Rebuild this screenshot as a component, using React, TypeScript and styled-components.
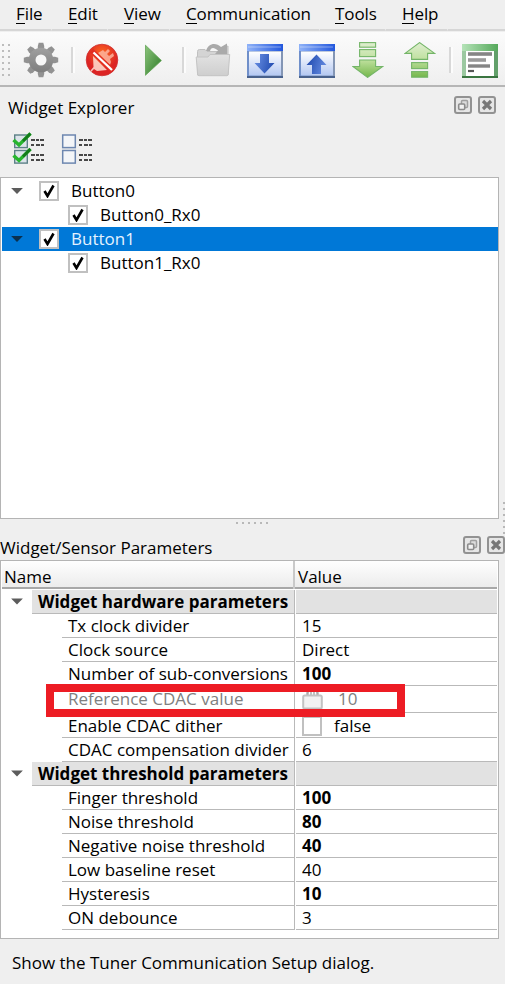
import React from "react";
import styled, { createGlobalStyle } from "styled-components";

const Global = createGlobalStyle`
  * { box-sizing: border-box; }
  html, body { margin: 0; background: #efefef; }
  body { overflow: hidden; }
`;

const Window = styled.div`
  width: 505px;
  height: 984px;
  position: relative;
  display: flex;
  flex-direction: column;
  background: #efefef;
  color: #000;
  font: 17px/24px "Open Sans", "Noto Sans", sans-serif;
  white-space: nowrap;
  overflow: hidden;
`;

const Label = styled.span<{ $track?: number }>`
  letter-spacing: ${(p) => p.$track ?? 0}px;
`;

const MenuBar = styled.nav`
  height: 32px;
  flex: none;
  display: flex;
`;

const MenuItem = styled.div<{ $width: number; $pad: number; $last?: boolean }>`
  width: ${(p) => p.$width}px;
  flex: none;
  height: 31px;
  padding: 2px 0 0 ${(p) => p.$pad}px;
  border-bottom: 2px solid #d6d6d6;
  border-right: ${(p) => (p.$last ? "0" : "1px solid #efefef")};
`;

const Mnemonic = styled.span`
  display: inline-block;
  height: 22px;
  line-height: 24px;
  border-bottom: 1px solid #000;
`;

const ToolBar = styled.div`
  height: 55px;
  flex: none;
  display: flex;
  align-items: flex-start;
  padding-top: 10px;
  background: linear-gradient(#fbfbfb, #efefef);
  border-bottom: 2px solid #b6b6b6;
`;

const ToolIcon = styled.svg<{ $gap: number; $w?: number }>`
  display: block;
  flex: none;
  width: ${(p) => p.$w ?? 36}px;
  height: 36px;
  margin-left: ${(p) => p.$gap}px;
`;

const Separator = styled.i<{ $gap: number }>`
  flex: none;
  width: 4px;
  height: 26px;
  margin: 5px 0 0 ${(p) => p.$gap}px;
  background: #d8d8d8;
  border-right: 2px solid #fcfcfc;
`;

const DockTitle = styled.header<{ $height: number; $top: number }>`
  height: ${(p) => p.$height}px;
  flex: none;
  display: flex;
  align-items: flex-start;
  padding: ${(p) => p.$top}px 9px 0 8px;
`;

const DockButtons = styled.div`
  margin-left: auto;
  display: flex;
  gap: 6px;
`;

const DockIcon = styled.svg`
  display: block;
  width: 18px;
  height: 18px;
`;

const CheckTools = styled.div`
  height: 47px;
  flex: none;
  display: flex;
  gap: 16px;
  padding: 2px 0 0 12px;
`;

const CheckToolIcon = styled.svg`
  display: block;
  width: 33px;
  height: 34px;
`;

const Panel = styled.section<{ $height: number }>`
  width: 499px;
  height: ${(p) => p.$height}px;
  flex: none;
  background: #fff;
  border: 1px solid #b4b4b4;
`;

const TreeRow = styled.div<{ $selected?: boolean; $level: number }>`
  height: 24px;
  margin: 0 0 0 1px;
  padding-left: ${(p) => 8 + p.$level * 58}px;
  display: flex;
  align-items: center;
  background: ${(p) => (p.$selected ? "#0078d7" : "transparent")};
  color: ${(p) => (p.$selected ? "#e4f2ff" : "#000")};
`;

const Tree = styled.div`
  padding-top: 1px;
`;

const Arrow = styled.i<{ $color?: string }>`
  flex: none;
  width: 14px;
  height: 7px;
  margin: 0 15px 0 0;
  background: ${(p) => p.$color ?? "#5c5c5c"};
  clip-path: polygon(8% 8%, 92% 8%, 50% 92%);
`;

const CheckBox = styled.span<{ $gap?: number }>`
  flex: none;
  width: 20px;
  height: 20px;
  margin-right: ${(p) => p.$gap ?? 12}px;
  border: 2px solid #c0c0c0;
  background: #fff;
  display: flex;
  align-items: center;
  justify-content: center;
`;

const SplitterDots = styled.div`
  height: 17px;
  flex: none;
  padding: 3px 0 0 236px;
  display: flex;
  gap: 4px;
`;

const Dot = styled.i`
  width: 2px;
  height: 2px;
  background: #b8b8b8;
`;

const EdgeDots = styled.div`
  position: absolute;
  left: 503px;
  top: 502px;
  display: flex;
  flex-direction: column;
  gap: 4px;
`;

const HeaderRow = styled.div`
  height: 28px;
  margin: 0 1px;
  display: grid;
  grid-template-columns: 293px 1fr;
  background: linear-gradient(#fefefe, #ececec);
  border-bottom: 2px solid #a8a8a8;
`;

const HeaderCell = styled.div<{ $first?: boolean }>`
  padding: ${(p) => (p.$first ? "4px 0 0 2px" : "4px 0 0 3px")};
  border-right: ${(p) => (p.$first ? "2px solid #c9c9c9" : "0")};
`;

const Row = styled.div<{ $tall?: boolean }>`
  height: ${(p) => (p.$tall ? 28 : 24)}px;
  margin: 0 1px 0 1px;
  display: grid;
  grid-template-columns: 293px 1fr;
  column-gap: 1px;
`;

const NameSide = styled.div`
  display: flex;
  align-items: center;
  min-width: 0;
`;

const NameCell = styled.div<{ $group?: boolean; $muted?: boolean }>`
  flex: 1;
  height: ${(p) => (p.$group ? "calc(100% - 1px)" : "calc(100% - 1px)")};
  align-self: flex-end;
  min-width: 0;
  padding-left: 6px;
  margin-left: ${(p) => (p.$group ? 0 : 60)}px;
  display: flex;
  align-items: center;
  border-bottom: 1px solid #b9b9b9;
  border-right: 1px solid #b9b9b9;
  background: ${(p) => (p.$group ? "#e2e2e2" : "transparent")};
  color: ${(p) => (p.$muted ? "#808080" : "#000")};
  font-weight: ${(p) => (p.$group ? 700 : 400)};
`;

const ValueCell = styled.div<{ $group?: boolean; $bold?: boolean; $muted?: boolean }>`
  height: calc(100% - 1px);
  align-self: end;
  padding-left: 6px;
  display: flex;
  align-items: center;
  border-bottom: 1px solid #b9b9b9;
  background: ${(p) => (p.$group ? "#e2e2e2" : "transparent")};
  color: ${(p) => (p.$muted ? "#808080" : "#000")};
  font-weight: ${(p) => (p.$bold ? 700 : 400)};
`;

const Toggle = styled.span`
  width: 30px;
  padding-left: 8px;
  display: flex;
`;

const LockIcon = styled.svg`
  width: 21px;
  height: 22px;
  margin-right: 15px;
`;

const Highlight = styled.div`
  position: absolute;
  left: 46px;
  top: 684px;
  width: 359px;
  height: 33px;
  border: 8px solid #ed1c24;
`;

const StatusBar = styled.footer`
  padding: 12px 0 0 12px;
`;

const Check = () => (
  <svg width="12" height="14" viewBox="0 0 12 14">
    <path d="M1.5 7 L4.5 12 L10.5 1.5" fill="none" stroke="#000" strokeWidth="2.6" />
  </svg>
);

const FloatIcon = () => (
  <DockIcon viewBox="0 0 18 18">
    <rect x="1" y="1" width="16" height="16" rx="2" fill="#e6e6e6" stroke="#929292" strokeWidth="2" />
    <rect x="7.5" y="4.5" width="6" height="7" rx="1" fill="#dcdcdc" stroke="#a0a0a0" strokeWidth="1.5" />
    <rect x="4.7" y="8" width="6" height="5.5" rx="1" fill="#f2f2f2" stroke="#8c8c8c" strokeWidth="1.6" />
  </DockIcon>
);

const CloseIcon = () => (
  <DockIcon viewBox="0 0 18 18">
    <rect x="1" y="1" width="16" height="16" rx="2" fill="#e6e6e6" stroke="#929292" strokeWidth="2" />
    <path d="M5 5 L13 13 M13 5 L5 13" stroke="#777" strokeWidth="3.2" />
  </DockIcon>
);

const Dock = ({ title, height, top, track }: { title: string; height: number; top: number; track?: number }) => (
  <DockTitle $height={height} $top={top}>
    <Label $track={track}>{title}</Label>
    <DockButtons>
      <FloatIcon />
      <CloseIcon />
    </DockButtons>
  </DockTitle>
);

const listLines = (x: number) => (
  <path
    d={`M${x} 8h4m1 0h3m1 0h4 M${x} 13h3m2 0h4m1 0h3 M${x} 23h4m1 0h3m1 0h4 M${x} 28h3m2 0h4m1 0h3`}
    stroke="#111"
    strokeWidth="1.7"
  />
);

const CheckAllIcon = () => (
  <CheckToolIcon viewBox="0 0 33 34">
    {[3, 18.5].map((y) => (
      <g key={y}>
        <rect x="2.7" y={y} width="12.6" height="12.6" fill="#dce4ea" stroke="#5d8188" strokeWidth="1.4" />
        <path d={`M1.5 ${y + 5} L7 ${y + 10} L18.5 ${y - 1.5}`} fill="none" stroke="#27b52e" strokeWidth="3.4" />
        <path d={`M11 ${y + 6} L18.5 ${y - 1.5}`} stroke="#137b1b" strokeWidth="2.6" />
      </g>
    ))}
    {listLines(19)}
  </CheckToolIcon>
);

const UncheckAllIcon = () => (
  <CheckToolIcon viewBox="0 0 33 34">
    {[3, 18.5].map((y) => (
      <rect key={y} x="1.7" y={y} width="12.6" height="12.6" fill="#f3f5f8" stroke="#6d87b0" strokeWidth="1.5" />
    ))}
    {listLines(18)}
  </CheckToolIcon>
);

const Defs = () => (
  <defs>
    <linearGradient id="gear" x2="0" y2="1">
      <stop stopColor="#a0a0a0" />
      <stop offset="1" stopColor="#7e7e7e" />
    </linearGradient>
    <radialGradient id="red" cy="0.3">
      <stop stopColor="#ff6a20" />
      <stop offset="1" stopColor="#dc2424" />
    </radialGradient>
    <linearGradient id="play" x2="1" y2="1">
      <stop stopColor="#8cc47c" />
      <stop offset="1" stopColor="#2c7a26" />
    </linearGradient>
    <linearGradient id="folder" x2="0" y2="1">
      <stop stopColor="#e2e2e2" />
      <stop offset="1" stopColor="#cecece" />
    </linearGradient>
    <linearGradient id="blueBar">
      <stop stopColor="#8fb2f8" />
      <stop offset="1" stopColor="#2257dd" />
    </linearGradient>
    <linearGradient id="blueBody" x2="0" y2="1">
      <stop stopColor="#fff" />
      <stop offset="1" stopColor="#b4c8f2" />
    </linearGradient>
    <linearGradient id="blueFrame">
      <stop stopColor="#6f8fca" />
      <stop offset="1" stopColor="#8496b4" />
    </linearGradient>
    <linearGradient id="blueArrow" x2="1" y2="0.3">
      <stop stopColor="#6d93e6" />
      <stop offset="1" stopColor="#2650b4" />
    </linearGradient>
    <linearGradient id="greenDown" gradientUnits="userSpaceOnUse" x1="0" y1="0" x2="0" y2="36">
      <stop stopColor="#e0efd2" />
      <stop offset="0.5" stopColor="#bfe09d" />
      <stop offset="1" stopColor="#71b548" />
    </linearGradient>
    <linearGradient id="greenBar">
      <stop stopColor="#b5e3b8" />
      <stop offset="1" stopColor="#55a95b" />
    </linearGradient>
  </defs>
);

const GearIcon = ({ gap }: { gap: number }) => (
  <ToolIcon $gap={gap} viewBox="0 0 36 36">
    <Defs />
    <g fill="url(#gear)">
      {[0, 45, 90, 135].map((a) => (
        <path key={a} d="M14.8 4 L15.7 0.8 H20.3 L21.2 4 V32 L20.3 35.2 H15.7 L14.8 32 Z" fill="#929292" transform={`rotate(${a} 18 18)`} />
      ))}
      <circle cx="18" cy="18" r="12.3" />
    </g>
    <circle cx="18" cy="18" r="5.5" fill="#f7f7f7" />
  </ToolIcon>
);

const DisconnectIcon = ({ gap }: { gap: number }) => (
  <ToolIcon $gap={gap} $w={34} viewBox="0 0 34 36">
    <circle cx="17" cy="18" r="15.8" fill="url(#red)" stroke="#cf3030" strokeWidth="0.8" />
    <path d="M8 14 L22 28 L12 29 L9 27 L6 30 L5.5 28.5 L8.5 25 Z" fill="#ffe1d4" opacity="0.85" />
    <path d="M13 11 L18 8 L20 10 L23 7 L25 9 L22 12 L24 14 L28 11 L29 14 L25 17 L26 20 L25 23 Z" fill="#fbb39e" opacity="0.85" />
    <path d="M6.5 8.5 L27.5 28.5" stroke="#e22e22" strokeWidth="4.6" />
    <path d="M8.5 10.5 L27 28" stroke="#fff" strokeWidth="2.3" />
  </ToolIcon>
);

const PlayIcon = ({ gap }: { gap: number }) => (
  <ToolIcon $gap={gap} $w={17} viewBox="0 0 17 36">
    <path d="M0.4 3.2 L16.4 18.5 L0.4 33.3 Z" fill="url(#play)" stroke="#5da151" strokeWidth="0.8" />
  </ToolIcon>
);

const OpenIcon = ({ gap }: { gap: number }) => (
  <ToolIcon $gap={gap} viewBox="0 0 36 36">
    <path d="M2.5 15 V9.5 Q2.5 7.5 4.5 7.5 H10 L12 9.5 H28 V6 L33 4 V33 H2.5 Z" fill="#d4d4d4" stroke="#c0c0c0" />
    <path d="M11 9 C13 1 21 0 26 5 L32 1.5 V12 H20 L23 8.5 C19 5 16 5 15 9 Z" fill="#aaa" />
    <path d="M1.2 15 H13 L15 12.5 H34.7 L33.2 32.5 Q33 33.7 31.8 33.7 H4 Q2.8 33.7 2.6 32.5 Z" fill="url(#folder)" stroke="#c4c4c4" />
  </ToolIcon>
);

const BlueWindowIcon = ({ gap, up }: { gap: number; up?: boolean }) => (
  <ToolIcon $gap={gap} viewBox="0 0 36 36">
    <rect x="0" y="2" width="36" height="34" fill="url(#blueFrame)" />
    <rect x="0" y="2" width="36" height="7" fill="url(#blueBar)" />
    <rect x="1" y="4" width="33" height="2" fill="#fff" opacity="0.2" />
    <rect x="2" y="9.5" width="32" height="24" fill="url(#blueBody)" />
    <rect x="0" y="34" width="36" height="2" fill="#48618c" />
    <path d="M13 12 H22 V21 H27.5 L17.5 31.5 L7.5 21 H13 Z" fill="url(#blueArrow)" transform={up ? "rotate(180 17.5 22)" : undefined} />
  </ToolIcon>
);

const DownloadIcon = ({ gap }: { gap: number }) => (
  <ToolIcon $gap={gap} $w={32} viewBox="0 0 32 36">
    <g fill="url(#greenDown)" stroke="#74b568" strokeWidth="1.1">
      <rect x="7.6" y="0.6" width="16" height="4.6" />
      <rect x="7.6" y="7.6" width="16" height="7" />
      <path d="M7.6 18 H23.6 V24.5 H30.7 L15.6 35.4 L1 24.5 H7.6 Z" />
    </g>
  </ToolIcon>
);

const UploadIcon = ({ gap }: { gap: number }) => (
  <ToolIcon $gap={gap} $w={32} viewBox="0 0 32 36">
    <g fill="url(#greenDown)" stroke="#74b568" strokeWidth="1.1">
      <path d="M7.6 17.4 H23.6 V11.4 H30.7 L15.6 0.6 L1 11.4 H7.6 Z" />
      <rect x="7.6" y="20.6" width="16" height="6" />
      <rect x="7.6" y="29.6" width="16" height="5.6" />
    </g>
  </ToolIcon>
);

const LogIcon = ({ gap }: { gap: number }) => (
  <ToolIcon $gap={gap} viewBox="0 0 36 36">
    <rect x="0" y="2" width="36" height="34" fill="#62a06a" />
    <rect x="0" y="2" width="4" height="32" fill="#9bc8a0" />
    <rect x="0" y="2" width="36" height="7" fill="url(#greenBar)" />
    <rect x="4" y="9" width="28" height="25" fill="#fff" />
    <rect x="0" y="34" width="36" height="2" fill="#3a7540" />
    <path d="M6 12h24" stroke="#858585" strokeWidth="3.6" />
    <path d="M6 18h18" stroke="#9a9a9a" strokeWidth="3.6" />
    <path d="M6 24h22" stroke="#858585" strokeWidth="3.4" />
    <path d="M6 29h6" stroke="#555" strokeWidth="2.2" />
  </ToolIcon>
);

const Grip = () => (
  <ToolIcon $gap={0} $w={14} viewBox="0 0 14 36">
    {[2, 8, 14, 20, 26, 32].map((y) => (
      <path key={y} d={`M2 ${y + 1}h2m4 0h2`} stroke="#bdbdbd" strokeWidth="2" />
    ))}
  </ToolIcon>
);

const menus = [
  { name: "File", width: 52, pad: 16, track: -0.1 },
  { name: "Edit", width: 56, pad: 16, track: -0.1 },
  { name: "View", width: 62, pad: 16, track: -0.1 },
  { name: "Communication", width: 150, pad: 16, track: -0.1 },
  { name: "Tools", width: 66, pad: 15, track: -0.1 },
  { name: "Help", width: 62, pad: 16, track: -0.1 },
];

const tree = [
  { name: "Button0", level: 0 },
  { name: "Button0_Rx0", level: 1 },
  { name: "Button1", level: 0, selected: true },
  { name: "Button1_Rx0", level: 1 },
];

type Param = { name: string; value?: string; bold?: boolean; kind?: "group" | "locked" | "toggle"; track?: number };

const params: Param[] = [
  { name: "Widget hardware parameters", kind: "group" },
  { name: "Tx clock divider", value: "15" },
  { name: "Clock source", value: "Direct" },
  { name: "Number of sub-conversions", value: "100", bold: true },
  { name: "Reference CDAC value", value: "10", kind: "locked" },
  { name: "Enable CDAC dither", value: "false", kind: "toggle" },
  { name: "CDAC compensation divider", value: "6" },
  { name: "Widget threshold parameters", kind: "group" },
  { name: "Finger threshold", value: "100", bold: true },
  { name: "Noise threshold", value: "80", bold: true },
  { name: "Negative noise threshold", value: "40", bold: true },
  { name: "Low baseline reset", value: "40" },
  { name: "Hysteresis", value: "10", bold: true },
  { name: "ON debounce", value: "3" },
];

const ArrowSlot = styled.div`
  width: 30px;
  flex: none;
  padding-left: 8px;
`;

const ParamRow = ({ p }: { p: Param }) => {
  const group = p.kind === "group";
  const locked = p.kind === "locked";
  return (
    <Row $tall={locked}>
      <NameSide>
        {group && (
          <ArrowSlot>
            <Arrow as="div" />
          </ArrowSlot>
        )}
        <NameCell $group={group} $muted={locked}>
          <Label $track={p.track}>{p.name}</Label>
        </NameCell>
      </NameSide>
      <ValueCell $group={group} $bold={p.bold} $muted={locked}>
        {locked && (
          <LockIcon viewBox="0 0 21 22">
            <path d="M5.5 9 V5 Q5.5 1.5 10.5 1.5 Q15.5 1.5 15.5 5 V9" fill="none" stroke="#aaa" strokeWidth="2.4" />
            <path d="M9 3v4m3 -4v4" stroke="#a0a0a0" strokeWidth="1.3" />
            <rect x="1.2" y="7.5" width="18.6" height="13" rx="1.5" fill="#f2f2f2" stroke="#c2c2c2" strokeWidth="2" />
          </LockIcon>
        )}
        {p.kind === "toggle" && <CheckBox />}
        <Label>{p.value}</Label>
      </ValueCell>
    </Row>
  );
};

export default function App() {
  return (
    <Window>
      <Global />
      <MenuBar>
        {menus.map((m) => (
          <MenuItem key={m.name} $width={m.width} $pad={m.pad}>
            <Label $track={m.track}>
              <Mnemonic>{m.name[0]}</Mnemonic>
              {m.name.slice(1)}
            </Label>
          </MenuItem>
        ))}
        <MenuItem $width={57} $pad={0} $last />
      </MenuBar>
      <ToolBar>
        <Grip />
        <GearIcon gap={9} />
        <Separator $gap={12} />
        <DisconnectIcon gap={10} />
        <PlayIcon gap={26} />
        <Separator $gap={20} />
        <OpenIcon gap={9} />
        <BlueWindowIcon gap={16} />
        <BlueWindowIcon gap={16} up />
        <DownloadIcon gap={17} />
        <UploadIcon gap={20} />
        <Separator $gap={13} />
        <LogIcon gap={9} />
      </ToolBar>
      <Dock title="Widget Explorer" height={43} top={9} />
      <CheckTools>
        <CheckAllIcon />
        <UncheckAllIcon />
      </CheckTools>
      <Panel $height={342}>
        <Tree>
          {tree.map((t) => (
            <TreeRow key={t.name} $level={t.level} $selected={t.selected}>
              {t.level === 0 && <Arrow $color={t.selected ? "#0b304e" : undefined} />}
              <CheckBox>
                <Check />
              </CheckBox>
              <Label>{t.name}</Label>
            </TreeRow>
          ))}
        </Tree>
      </Panel>
      <SplitterDots>
        {[0, 1, 2, 3, 4, 5].map((i) => (
          <Dot key={i} />
        ))}
      </SplitterDots>
      <Dock title="Widget/Sensor Parameters" height={24} top={-2} />
      <Panel $height={379}>
        <HeaderRow>
          <HeaderCell $first>Name</HeaderCell>
          <HeaderCell>Value</HeaderCell>
        </HeaderRow>
        {params.map((p) => (
          <ParamRow key={p.name} p={p} />
        ))}
      </Panel>
      <StatusBar>
        <Label>Show the Tuner Communication Setup dialog.</Label>
      </StatusBar>
      <EdgeDots>
        {[0, 1, 2, 3, 4, 5].map((i) => (
          <Dot key={i} />
        ))}
      </EdgeDots>
      <Highlight />
    </Window>
  );
}
